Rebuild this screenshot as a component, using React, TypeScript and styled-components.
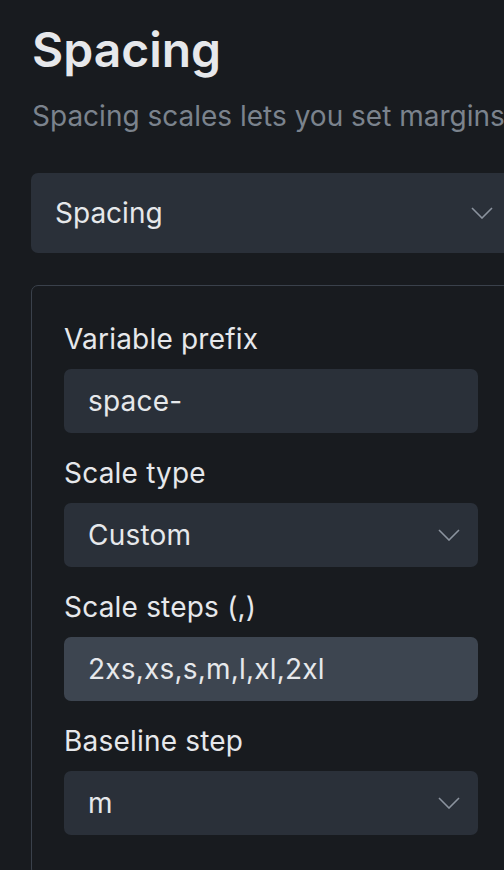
import React from 'react';
import styled, { createGlobalStyle } from 'styled-components';

const fields = [
    { label: 'Variable prefix', value: 'space-', kind: 'input' },
    { label: 'Scale type', value: 'Custom', kind: 'select' },
    { label: 'Scale steps (,)', value: '2xs,xs,s,m,l,xl,2xl', kind: 'input', active: true },
    { label: 'Baseline step', value: 'm', kind: 'select' },
];

const Chevron = () => (
    <ChevronIcon width="22" height="12" viewBox="0 0 22 12" fill="none">
        <polyline points="1,1 11,11 21,1" stroke="currentColor" strokeWidth="1.6" />
    </ChevronIcon>
);

const App = () => {
    return (
        <>
            <GlobalStyle />
            <Page>
                <Title>Spacing</Title>
                <Subtitle>Spacing scales lets you set margins, paddings and gaps</Subtitle>
                <TopSelect>
                    <span>Spacing</span>
                    <Chevron />
                </TopSelect>
                <Panel>
                    {fields.map((field, index) => (
                        <Field key={`field-${index}`}>
                            <Label>{field.label}</Label>
                            <Control active={field.active}>
                                <span>{field.value}</span>
                                {field.kind === 'select' && <Chevron />}
                            </Control>
                        </Field>
                    ))}
                </Panel>
            </Page>
        </>
    );
}

export default App;


const GlobalStyle = createGlobalStyle`
    html, body {
        margin: 0;
        padding: 0;
        background: #181b1f;
        overflow: hidden;
    }

    body {
        font-family: Inter, "Noto Sans", sans-serif;
        color: #e6e8eb;
    }
`;

const Page = styled.div`
    width: 480px;
    padding: 21px 0 0 31px;
    display: flex;
    flex-direction: column;
`;

const Title = styled.h1`
    margin: 0 0 0 1px;
    font-size: 48px;
    line-height: 1.2;
    font-weight: 600;
    color: #e6e8eb;
`;

const Subtitle = styled.p`
    margin: 16px 0 0 1px;
    font-size: 28px;
    line-height: 1.5;
    color: #7b838d;
    white-space: nowrap;
`;

const TopSelect = styled.div`
    margin-top: 36px;
    height: 80px;
    box-sizing: border-box;
    padding: 0 18px 0 24px;
    display: flex;
    align-items: center;
    justify-content: space-between;
    background: #2a3039;
    border-radius: 7px;
    font-size: 28px;
    color: #e6e8eb;
`;

const Panel = styled.div`
    margin-top: 32px;
    border: 1.5px solid #3a414b;
    border-radius: 7px;
    padding: 32px 32px 40px 32px;
    display: flex;
    flex-direction: column;
    gap: 19px;
`;

const Field = styled.div`
    display: flex;
    flex-direction: column;
    gap: 9px;
`;

const Label = styled.div`
    font-size: 28px;
    line-height: 1.5;
    letter-spacing: 0.2px;
    color: #e6e8eb;
`;

const Control = styled.div<{ active?: boolean }>`
    height: 64px;
    box-sizing: border-box;
    padding: 0 18px 0 24px;
    display: flex;
    align-items: center;
    justify-content: space-between;
    background: ${({ active }) => (active ? '#3d4550' : '#2a3039')};
    border-radius: 7px;
    font-size: 28px;
    letter-spacing: 0.2px;
    color: #e6e8eb;
`;

const ChevronIcon = styled.svg`
    color: #8b939e;
    flex-shrink: 0;
`;
